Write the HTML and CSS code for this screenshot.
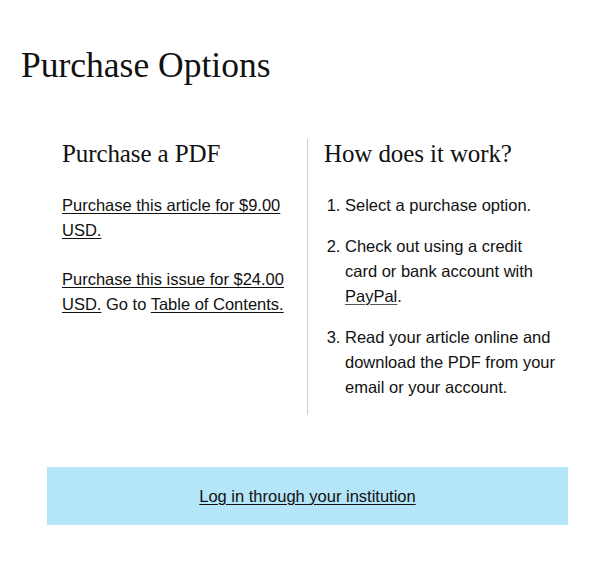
FILE: index.html
```html
<!DOCTYPE html>
<html lang="en">
<head>
<meta charset="utf-8">
<title>Purchase Options</title>
<link rel="stylesheet" href="styles.css">
</head>
<body>
<main class="page">
  <h2 class="title">Purchase Options</h2>
  <div class="content">
    <div class="columns">
      <section class="col col-left">
        <h3 class="col-heading">Purchase a PDF</h3>
        <p class="para"><a href="#" class="link">Purchase this article for $9.00 USD.</a></p>
        <p class="para"><a href="#" class="link">Purchase this issue for $24.00 USD.</a> Go to <a href="#" class="link">Table of Contents.</a></p>
      </section>
      <section class="col col-right">
        <h3 class="col-heading">How does it work?</h3>
        <ol class="steps">
          <li class="step">Select a purchase option.</li>
          <li class="step">Check out using a credit card or bank account with <a href="#" class="link link-soft">PayPal</a>.</li>
          <li class="step">Read your article online and download the PDF from your email or your account.</li>
        </ol>
      </section>
    </div>
    <div class="login">
      <a href="#" class="link">Log in through your institution</a>
    </div>
  </div>
</main>
</body>
</html>
```
FILE: styles.css
```css
html, body {
  margin: 0;
  padding: 0;
  background: #ffffff;
}

body {
  color: #111111;
  font-family: "Liberation Sans", Arial, sans-serif;
  font-size: 16.5px;
  line-height: 25px;
}

.page {
  padding: 44px 0 0 21px;
}

.title {
  margin: 0;
  font-family: "Liberation Serif", "Times New Roman", serif;
  font-weight: 400;
  font-size: 35.5px;
  line-height: 42px;
  color: #111111;
}

.content {
  margin: 53px 0 0 26px;
  width: 521px;
}

.columns {
  display: grid;
  grid-template-columns: 260px 261px;
}

.col-left {
  padding: 0 15px 15px 15px;
}

.col-right {
  border-left: 1px solid #cfcfcf;
  padding: 0 11.5px 15px 16px;
}

.col-heading {
  margin: 0 0 24px 0;
  font-family: "Liberation Serif", "Times New Roman", serif;
  font-weight: 400;
  font-size: 25px;
  line-height: 30px;
  letter-spacing: -0.1px;
  color: #111111;
}

.para {
  margin: 0 0 24px 0;
}

.para:last-child {
  margin-bottom: 0;
}

.link {
  color: #111111;
  text-decoration: underline;
  text-decoration-thickness: 1px;
  text-underline-offset: 2px;
}

.link-soft {
  text-decoration-color: #555555;
}

.steps {
  margin: 0;
  padding: 0 0 0 21px;
}

.step {
  margin: 0 0 16px 0;
}

.step:last-child {
  margin-bottom: 0;
}

.login {
  margin-top: 52px;
  background: #b5e5f8;
  height: 58px;
  display: flex;
  align-items: center;
  justify-content: center;
}
```
